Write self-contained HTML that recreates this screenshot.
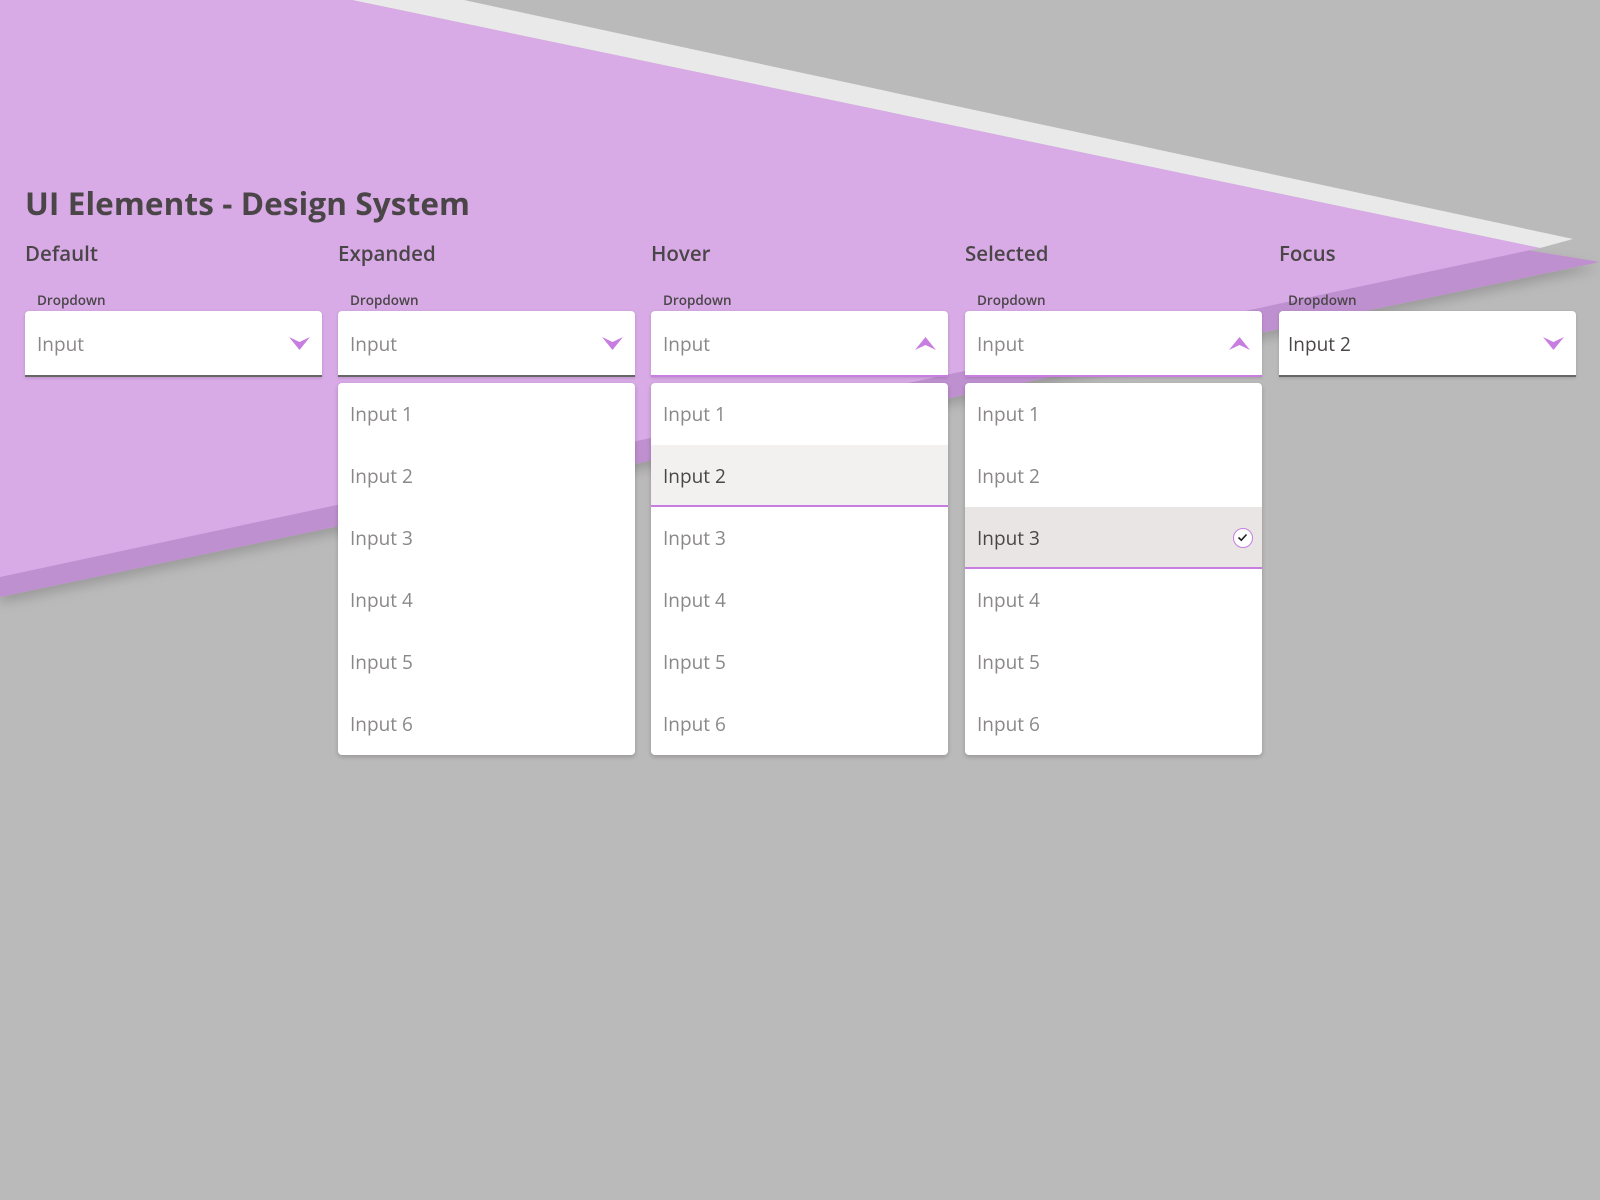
<!DOCTYPE html>
<html><head><meta charset="utf-8"><style>
*{margin:0;padding:0;box-sizing:border-box}
body{width:1600px;height:1200px;background:#bbbaba;position:relative;overflow:hidden;font-family:"Open Sans","Liberation Sans",sans-serif;color:#4a4648}
svg.bg{position:absolute;left:0;top:0}
h1{position:absolute;left:25px;top:182px;font-size:31.5px;font-weight:bold;color:#4a4648;letter-spacing:0.1px}
.col{position:absolute;top:238px;width:297px}
.col h2{font-size:20.5px;color:#4a4648;height:41px;line-height:32px;font-weight:600}
.lbl{font-size:13.5px;font-weight:600;margin:12px 0 0 12px;height:20px;line-height:18px}
.box{background:#fff;height:66px;border-radius:4px 4px 0 0;border-bottom:2px solid #666;position:relative;box-shadow:0 1px 3px rgba(0,0,0,.15);font-size:19px;color:#8a8788;line-height:66px;padding-left:12px}
.box.p{border-bottom-color:#c77ee0}
.box.dark{color:#4a4648}
.box svg{position:absolute;right:12px;top:26px}
.list{background:#fff;margin-top:6px;border-radius:4px;box-shadow:0 2px 5px rgba(0,0,0,.2);overflow:hidden}
.it{height:62px;line-height:62px;padding-left:12px;font-size:19px;color:#8a8788;position:relative}
.it.h{background:#f2f1f0;color:#4a4648;border-bottom:2px solid #c77ee0;line-height:62px}
.it.s{background:#e8e5e4;color:#4a4648;border-bottom:2px solid #c77ee0;line-height:62px}
.chk{position:absolute;right:9px;top:21px;width:20px;height:20px;border-radius:50%;background:#fff;border:1.5px solid #c77ee0}
</style></head><body>
<svg class="bg" width="1600" height="1200">
<defs><filter id="sh" x="-10%" y="-10%" width="120%" height="130%"><feDropShadow dx="0" dy="6" stdDeviation="6" flood-color="#000" flood-opacity="0.18"/></filter></defs>
<polygon points="0,0 1600,262 0,597" fill="#bf90cf" filter="url(#sh)"/>
<polygon points="352,0 464,0 1573,239 1540,248" fill="#e9e9e9"/>
<polygon points="0,0 352,0 1540,248 0,577" fill="#d8aae6"/>
</svg>
<h1>UI Elements - Design System</h1>
<div class="col" style="left:25px"><h2>Default</h2><div class="lbl">Dropdown</div>
<div class="box">Input<svg width="21" height="13"><polygon points="0,0 10.5,5 21,0 10.5,13" fill="#c77ee0"/></svg></div></div>

<div class="col" style="left:338px"><h2>Expanded</h2><div class="lbl">Dropdown</div>
<div class="box">Input<svg width="21" height="13"><polygon points="0,0 10.5,5 21,0 10.5,13" fill="#c77ee0"/></svg></div>
<div class="list"><div class="it">Input 1</div><div class="it">Input 2</div><div class="it">Input 3</div><div class="it">Input 4</div><div class="it">Input 5</div><div class="it">Input 6</div></div></div>

<div class="col" style="left:651px"><h2>Hover</h2><div class="lbl">Dropdown</div>
<div class="box p">Input<svg width="21" height="13"><polygon points="0,13 10.5,8 21,13 10.5,0" fill="#c77ee0"/></svg></div>
<div class="list"><div class="it">Input 1</div><div class="it h">Input 2</div><div class="it">Input 3</div><div class="it">Input 4</div><div class="it">Input 5</div><div class="it">Input 6</div></div></div>

<div class="col" style="left:965px"><h2>Selected</h2><div class="lbl">Dropdown</div>
<div class="box p">Input<svg width="21" height="13"><polygon points="0,13 10.5,8 21,13 10.5,0" fill="#c77ee0"/></svg></div>
<div class="list"><div class="it">Input 1</div><div class="it">Input 2</div><div class="it s">Input 3<span class="chk"><svg width="17" height="17" style="position:absolute;left:0;top:0"><path d="M4.5 8.5 L7.3 11.2 L12.5 5.5" stroke="#222" stroke-width="1.6" fill="none"/></svg></span></div><div class="it">Input 4</div><div class="it">Input 5</div><div class="it">Input 6</div></div></div>

<div class="col" style="left:1279px"><h2>Focus</h2><div class="lbl" style="margin-left:9px">Dropdown</div>
<div class="box dark" style="padding-left:9px">Input 2<svg width="21" height="13"><polygon points="0,0 10.5,5 21,0 10.5,13" fill="#c77ee0"/></svg></div></div>
</body></html>
